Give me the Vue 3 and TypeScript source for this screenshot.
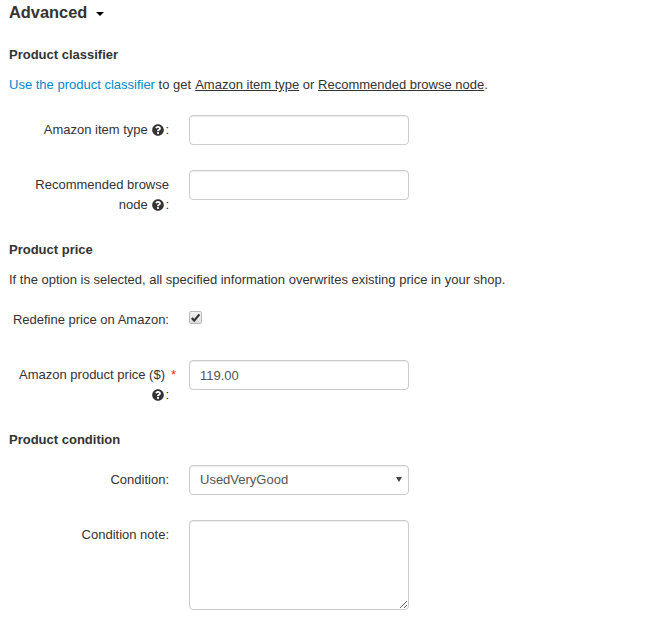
<script setup lang="ts">
const helpPath = "M504 256c0 136.997-111.043 248-248 248S8 392.997 8 256C8 119.083 119.043 8 256 8s248 111.083 248 248zM262.655 90c-54.497 0-89.255 22.957-116.549 63.758-3.536 5.286-2.353 12.415 2.715 16.258l34.699 26.31c5.205 3.947 12.621 3.008 16.665-2.122 17.864-22.658 30.113-35.797 57.303-35.797 20.429 0 45.698 13.148 45.698 32.958 0 14.976-12.363 22.667-32.534 33.976C247.128 238.528 216 254.941 216 296v4c0 6.627 5.373 12 12 12h56c6.627 0 12-5.373 12-12v-1.333c0-28.462 83.186-29.647 83.186-106.667 0-58.002-60.165-102-116.531-102zM256 338c-25.365 0-46 20.635-46 46 0 25.364 20.635 46 46 46s46-20.636 46-46c0-25.365-20.635-46-46-46z";
</script>

<template>
  <div class="page">
    <h3 class="title">Advanced <span class="caret"></span></h3>

    <h4 class="section first">Product classifier</h4>
    <p class="note">
      <a class="link" href="#">Use the product classifier</a> to get
      <u class="term">Amazon item type</u> or <u>Recommended browse node</u>.
    </p>

    <div class="row">
      <label class="label">Amazon item type <svg class="help" viewBox="0 0 512 512"><path :d="helpPath" /></svg>:</label>
      <input class="control" type="text" />
    </div>
    <div class="row">
      <label class="label">Recommended browse node <svg class="help" viewBox="0 0 512 512"><path :d="helpPath" /></svg>:</label>
      <input class="control" type="text" />
    </div>

    <h4 class="section">Product price</h4>
    <p class="note">If the option is selected, all specified information overwrites existing price in your shop.</p>

    <div class="row check-row">
      <label class="label">Redefine price on Amazon:</label>
      <span class="check">
        <svg viewBox="0 0 13 13"><path d="M2.8 7 L5.2 9.6 L10.4 3.4" /></svg>
      </span>
    </div>
    <div class="row">
      <label class="label">Amazon product price ($)<span class="req">*</span> <svg class="help" viewBox="0 0 512 512"><path :d="helpPath" /></svg>:</label>
      <input class="control" type="text" value="119.00" />
    </div>

    <h4 class="section">Product condition</h4>

    <div class="row condition">
      <label class="label">Condition:</label>
      <div class="select-wrap">
        <select class="control select">
          <option>UsedVeryGood</option>
        </select>
      </div>
    </div>
    <div class="row last">
      <label class="label">Condition note:</label>
      <textarea class="control area"></textarea>
    </div>
  </div>
</template>

<style>
html, body { background: #fff; }
</style>

<style scoped>
.page {
  box-sizing: border-box;
  width: 662px;
  height: 641px;
  padding: 0 9px;
  overflow: hidden;
  font-family: "Liberation Sans", Arial, sans-serif;
  font-size: 13px;
  line-height: 20px;
  color: #333;
}
.title {
  margin: 0;
  padding-top: 2px;
  font-size: 16.4px;
  line-height: 20px;
  font-weight: bold;
}
.caret {
  display: inline-block;
  width: 0;
  height: 0;
  margin-left: 4px;
  vertical-align: middle;
  border-top: 4px solid #000;
  border-left: 4.5px solid transparent;
  border-right: 4.5px solid transparent;
}
.section {
  margin: 0;
  font-size: 13px;
  line-height: 20px;
  font-weight: bold;
}
.section.first { margin-top: 23px; }
.note { margin: 10px 0 20px; }
.link { color: #0088cc; text-decoration: none; }
.term { margin-left: 0.5px; }
.row {
  display: grid;
  grid-template-columns: 160px 220px;
  column-gap: 20px;
  align-items: start;
  margin-bottom: 25px;
}
.label {
  padding-top: 5px;
  text-align: right;
}
.req {
  display: inline-block;
  width: 4px;
  text-indent: 6px;
  white-space: nowrap;
  color: #e13300;
}
.help {
  display: inline-block;
  width: 12px;
  height: 12px;
  margin: 0 1px 0 1px;
  vertical-align: -2px;
  fill: #333;
}
.control {
  box-sizing: border-box;
  width: 220px;
  height: 30px;
  margin: 0;
  padding: 5px 10px;
  border: 1px solid #ccc;
  border-radius: 4px;
  background: #fff;
  box-shadow: inset 0 1px 1px rgba(0, 0, 0, 0.075);
  font-family: inherit;
  font-size: 13px;
  line-height: 18px;
  color: #555;
}
.area {
  display: block;
  height: 90px;
}
.select-wrap { position: relative; width: 220px; height: 30px; }
.select-wrap::after {
  content: "";
  position: absolute;
  left: 207px;
  top: 12px;
  width: 0;
  height: 0;
  border-top: 5px solid #444;
  border-left: 3.5px solid transparent;
  border-right: 3.5px solid transparent;
  pointer-events: none;
}
.select {
  appearance: none;
  display: block;
}
.check {
  box-sizing: border-box;
  display: block;
  width: 13px;
  height: 13px;
  margin-top: 1px;
  border: 1px solid #bbb;
  border-radius: 2px;
  background: linear-gradient(#f2f2f2, #dedede);
}
.check svg {
  display: block;
  width: 13px;
  height: 13px;
  margin: -1px;
  fill: none;
  stroke: #333;
  stroke-width: 2.2;
}
.check-row { margin-top: 0; margin-bottom: 30px; }
.check-row .label { padding-top: 0; }
.condition { margin-top: 15px; }
</style>
